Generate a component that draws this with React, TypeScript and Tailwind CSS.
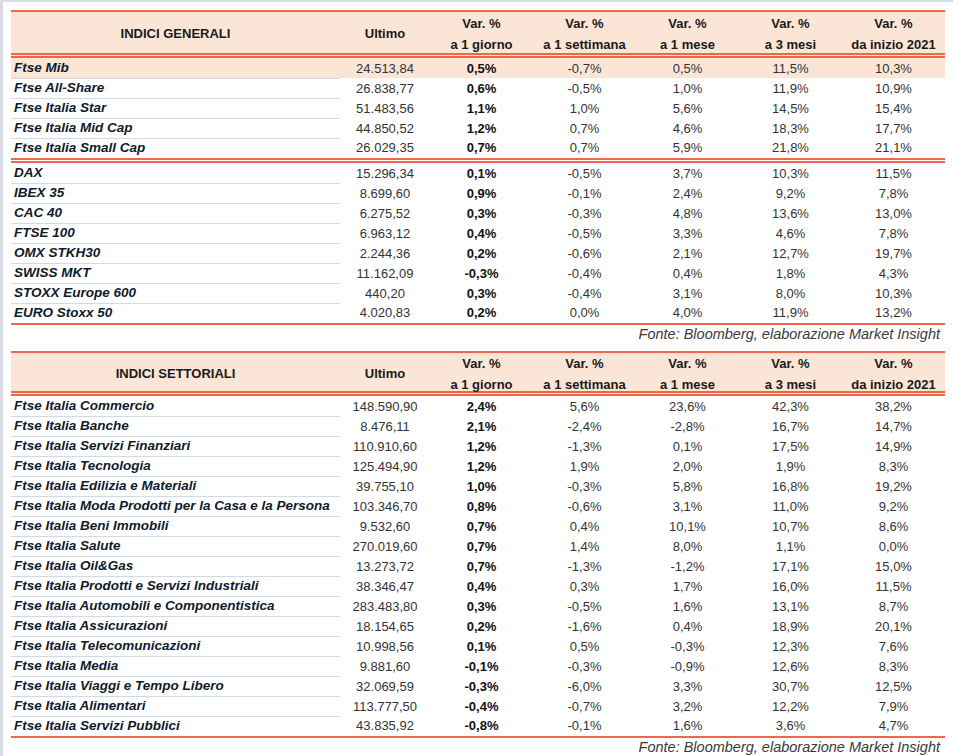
import React from "react";

type Row = [string, string, string, string, string, string, string];

const generali: Row[][] = [
  [
    ["Ftse Mib", "24.513,84", "0,5%", "-0,7%", "0,5%", "11,5%", "10,3%"],
    ["Ftse All-Share", "26.838,77", "0,6%", "-0,5%", "1,0%", "11,9%", "10,9%"],
    ["Ftse Italia Star", "51.483,56", "1,1%", "1,0%", "5,6%", "14,5%", "15,4%"],
    ["Ftse Italia Mid Cap", "44.850,52", "1,2%", "0,7%", "4,6%", "18,3%", "17,7%"],
    ["Ftse Italia Small Cap", "26.029,35", "0,7%", "0,7%", "5,9%", "21,8%", "21,1%"],
  ],
  [
    ["DAX", "15.296,34", "0,1%", "-0,5%", "3,7%", "10,3%", "11,5%"],
    ["IBEX 35", "8.699,60", "0,9%", "-0,1%", "2,4%", "9,2%", "7,8%"],
    ["CAC 40", "6.275,52", "0,3%", "-0,3%", "4,8%", "13,6%", "13,0%"],
    ["FTSE 100", "6.963,12", "0,4%", "-0,5%", "3,3%", "4,6%", "7,8%"],
    ["OMX STKH30", "2.244,36", "0,2%", "-0,6%", "2,1%", "12,7%", "19,7%"],
    ["SWISS MKT", "11.162,09", "-0,3%", "-0,4%", "0,4%", "1,8%", "4,3%"],
    ["STOXX Europe 600", "440,20", "0,3%", "-0,4%", "3,1%", "8,0%", "10,3%"],
    ["EURO Stoxx 50", "4.020,83", "0,2%", "0,0%", "4,0%", "11,9%", "13,2%"],
  ],
];

const settoriali: Row[][] = [
  [
    ["Ftse Italia Commercio", "148.590,90", "2,4%", "5,6%", "23,6%", "42,3%", "38,2%"],
    ["Ftse Italia Banche", "8.476,11", "2,1%", "-2,4%", "-2,8%", "16,7%", "14,7%"],
    ["Ftse Italia Servizi Finanziari", "110.910,60", "1,2%", "-1,3%", "0,1%", "17,5%", "14,9%"],
    ["Ftse Italia Tecnologia", "125.494,90", "1,2%", "1,9%", "2,0%", "1,9%", "8,3%"],
    ["Ftse Italia Edilizia e Materiali", "39.755,10", "1,0%", "-0,3%", "5,8%", "16,8%", "19,2%"],
    ["Ftse Italia Moda Prodotti per la Casa e la Persona", "103.346,70", "0,8%", "-0,6%", "3,1%", "11,0%", "9,2%"],
    ["Ftse Italia Beni Immobili", "9.532,60", "0,7%", "0,4%", "10,1%", "10,7%", "8,6%"],
    ["Ftse Italia Salute", "270.019,60", "0,7%", "1,4%", "8,0%", "1,1%", "0,0%"],
    ["Ftse Italia Oil&Gas", "13.273,72", "0,7%", "-1,3%", "-1,2%", "17,1%", "15,0%"],
    ["Ftse Italia Prodotti e Servizi Industriali", "38.346,47", "0,4%", "0,3%", "1,7%", "16,0%", "11,5%"],
    ["Ftse Italia Automobili e Componentistica", "283.483,80", "0,3%", "-0,5%", "1,6%", "13,1%", "8,7%"],
    ["Ftse Italia Assicurazioni", "18.154,65", "0,2%", "-1,6%", "0,4%", "18,9%", "20,1%"],
    ["Ftse Italia Telecomunicazioni", "10.998,56", "0,1%", "0,5%", "-0,3%", "12,3%", "7,6%"],
    ["Ftse Italia Media", "9.881,60", "-0,1%", "-0,3%", "-0,9%", "12,6%", "8,3%"],
    ["Ftse Italia Viaggi e Tempo Libero", "32.069,59", "-0,3%", "-6,0%", "3,3%", "30,7%", "12,5%"],
    ["Ftse Italia Alimentari", "113.777,50", "-0,4%", "-0,7%", "3,2%", "12,2%", "7,9%"],
    ["Ftse Italia Servizi Pubblici", "43.835,92", "-0,8%", "-0,1%", "1,6%", "3,6%", "4,7%"],
  ],
];

const varHeads = [
  "a 1 giorno",
  "a 1 settimana",
  "a 1 mese",
  "a 3 mesi",
  "da inizio 2021",
];

const grid = "grid grid-cols-[329px_90px_103px_103px_103px_103px_103px]";

function Table({ title, groups, tall }: { title: string; groups: Row[][]; tall: boolean }) {
  return (
    <div className="w-[934px]">
      {/* Header */}
      <div
        className={`${grid} border-t-2 border-b-[5px] border-double border-t-[#f0654b] border-b-[#f0654b] bg-[#fbe5d6] text-[13px] font-bold text-[#1a1a1a] ${
          tall ? "h-[48px]" : "h-[45px]"
        }`}
      >
        <div className="flex items-center justify-center">{title}</div>
        <div className="flex items-center justify-center">Ultimo</div>
        {varHeads.map((h) => (
          <div
            key={h}
            className={`flex flex-col items-center justify-center leading-[21px] ${tall ? "pt-[1px]" : ""}`}
          >
            <span>Var. %</span>
            <span>{h}</span>
          </div>
        ))}
      </div>

      {/* Body */}
      {groups.map((rows, gi) => (
        <div
          key={gi}
          className={
            gi < groups.length - 1
              ? "border-b-[5px] border-double border-[#f0654b]"
              : "border-b-2 border-[#f0654b]"
          }
        >
          {rows.map((r, ri) => {
            const highlight = gi === 0 && ri === 0 && tall;
            const last = ri === rows.length - 1;
            return (
              <div
                key={r[0]}
                className={`${grid} h-[20px] text-[13px] ${highlight ? "bg-[#fbe5d6]" : ""}`}
              >
                <div
                  className={`flex items-center pl-[3px] text-[13.5px] font-bold italic text-[#0f1a2a] ${
                    last ? "" : "border-b border-[#d3d9e6]"
                  }`}
                >
                  {r[0]}
                </div>
                <div className="flex items-center justify-center text-[#333333]">{r[1]}</div>
                <div className="flex items-center justify-center font-bold text-[#111111]">{r[2]}</div>
                {r.slice(3).map((v, i) => (
                  <div key={i} className="flex items-center justify-center text-[#333333]">
                    {v}
                  </div>
                ))}
              </div>
            );
          })}
        </div>
      ))}

      <div className="h-[20px] pr-[5px] text-right text-[14.5px] italic leading-[19px] text-[#3a3a3a]">
        Fonte: Bloomberg, elaborazione Market Insight
      </div>
    </div>
  );
}

export default function App() {
  return (
    <div
      className="min-h-screen border-l-[3px] border-t-2 border-[#d7dce7] bg-white pl-[8px] pt-[8px]"
      style={{ fontFamily: '"Liberation Sans", Arial, sans-serif' }}
    >
      <Table title="INDICI GENERALI" groups={generali} tall />
      <div className="h-[6px]" />
      <Table title="INDICI SETTORIALI" groups={settoriali} tall={false} />
    </div>
  );
}
